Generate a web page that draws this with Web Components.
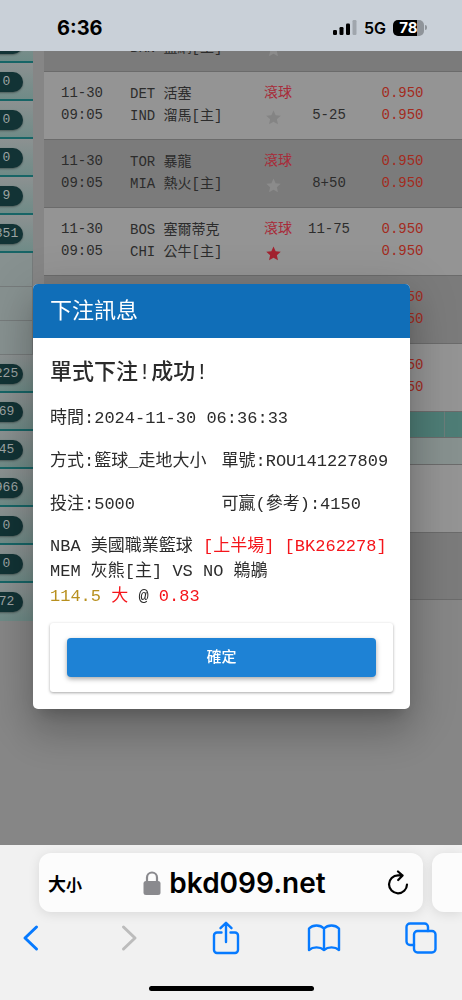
<!DOCTYPE html>
<html lang="zh-Hant">
<head>
<meta charset="utf-8">
<meta name="viewport" content="width=device-width, initial-scale=1">
<title>下注訊息</title>
<style>
  html, body {
    margin: 0;
  }
  body {
    display: flex;
    flex-direction: column;
    min-height: 100vh;
    background: #868686;
    font-family: "Liberation Mono", "Noto Sans CJK TC", monospace;
  }
</style>
</head>
<body>
<status-bar time="6:36" network="5G" battery="78"></status-bar>
<page-view>
  <side-menu slot="menu"></side-menu>
  <odds-table></odds-table>
</page-view>
<browser-bar host="bkd099.net"></browser-bar>

<bet-dialog heading="下注訊息">
  <h2 slot="title">單式下注!成功!</h2>
  <bet-receipt></bet-receipt>
</bet-dialog>

<script>
class StatusBar extends HTMLElement {
  constructor() {
    super();
    this.attachShadow({ mode: 'open' });
  }

  connectedCallback() {
    this.shadowRoot.innerHTML = `
      <style>
        :host {
          display: flex;
          justify-content: space-between;
          align-items: center;
          height: 51px;
          padding: 4px 35px 0 57px;
          box-sizing: border-box;
          background: #c9d0d8;
          color: #000;
          font-family: Inter, "Liberation Sans", sans-serif;
          position: relative;
          z-index: 1;
        }
        .time {
          font-size: 20px;
          font-weight: 700;
        }
        .right {
          display: flex;
          align-items: center;
          gap: 7px;
          font-size: 16px;
          font-weight: 600;
        }
        .battery {
          display: flex;
          align-items: center;
          gap: 1px;
        }
        .level {
          width: 31px;
          height: 16px;
          line-height: 16px;
          border-radius: 5px;
          background: linear-gradient(to right, #000 78%, #8f949a 78%);
          color: #fff;
          text-align: center;
          font-size: 15px;
          font-weight: 700;
        }
        .cap {
          width: 2px;
          height: 5px;
          border-radius: 0 2px 2px 0;
          background: #8f949a;
        }
      </style>
      <span class="time">${this.getAttribute('time')}</span>
      <div class="right">
        <svg width="24" height="15" viewBox="0 0 24 15">
          <rect x="0" y="10" width="4" height="5" rx="1.2"/>
          <rect x="6.5" y="7" width="4" height="8" rx="1.2"/>
          <rect x="13" y="3.5" width="4" height="11.5" rx="1.2"/>
          <rect x="19.5" y="0" width="4" height="15" rx="1.2" fill="#a0a6ad"/>
        </svg>
        <span>${this.getAttribute('network')}</span>
        <div class="battery">
          <span class="level">${this.getAttribute('battery')}</span>
          <span class="cap"></span>
        </div>
      </div>
    `;
  }
}

class PageView extends HTMLElement {
  constructor() {
    super();
    this.attachShadow({ mode: 'open' });
    this.shadowRoot.innerHTML = `
      <style>
        :host {
          display: flex;
          flex: 1 0 auto;
          align-items: flex-start;
          overflow: hidden;
          gap: 11px;
        }
        main {
          flex: 1;
          min-width: 0;
        }
      </style>
      <slot name="menu"></slot>
      <main><slot></slot></main>
    `;
  }
}

// null is an empty row, everything else shows a count badge
const MENU = ['0', '0', '0', '0', '9', '351', null, null, null, '225', '69', '45', '966', '0', '0', '72'];

class SideMenu extends HTMLElement {
  constructor() {
    super();
    this.attachShadow({ mode: 'open' });
  }

  connectedCallback() {
    const items = MENU.map(n => n === null
      ? '<li class="plain"></li>'
      : `<li><span>${n}</span></li>`).join('');
    this.shadowRoot.innerHTML = `
      <style>
        :host {
          display: block;
          flex: none;
          width: 33px;
          margin-top: -26px;
          overflow: hidden;
        }
        ul {
          list-style: none;
          margin: 0;
          padding: 0;
        }
        li {
          display: flex;
          justify-content: flex-end;
          align-items: center;
          height: 38px;
          padding: 2px 10px 0 0;
          box-sizing: border-box;
          border-bottom: 2px solid #176566;
          background: linear-gradient(#8c9191, #6f8b87);
        }
        li.plain {
          height: 34px;
          border-bottom: 1px solid #767b7b;
          border-right: 1px solid #767b7b;
          background: #879190;
        }
        li:last-child {
          border-bottom-color: #6f8b87;
        }
        span {
          flex: none;
          width: 33px;
          height: 20px;
          line-height: 19px;
          border-radius: 10px;
          background: #123335;
          box-shadow: 0 1px 2px rgba(0, 0, 0, .35);
          color: #9da3a3;
          font-size: 13px;
          text-align: center;
        }
      </style>
      <ul>${items}</ul>
    `;
  }
}

const GAMES = [
  { away: '', home: 'BKN 籃網[主]', date: ['', ''], live: '', line: ['', ''], odds: ['', ''] },
  { away: 'DET 活塞', home: 'IND 溜馬[主]', date: ['11-30', '09:05'], live: '滾球', line: ['', '5-25'], odds: ['0.950', '0.950'] },
  { away: 'TOR 暴龍', home: 'MIA 熱火[主]', date: ['11-30', '09:05'], live: '滾球', line: ['', '8+50'], odds: ['0.950', '0.950'] },
  { away: 'BOS 塞爾蒂克', home: 'CHI 公牛[主]', date: ['11-30', '09:05'], live: '滾球', line: ['11-75', ''], odds: ['0.950', '0.950'], fav: true },
  { odds: ['0.950', '0.950'] },
  { odds: ['0.950', '0.950'] },
  { kind: 'head' },
  { kind: 'sub' },
  {},
  {}
];

const STAR = `<svg width="15" height="15" viewBox="0 0 24 24"><path d="M12 0.8l3.4 7.6 8.2.8-6.2 5.5 1.8 8.1L12 18.6l-7.2 4.2 1.8-8.1L.4 9.2l8.2-.8z"/></svg>`;

class OddsTable extends HTMLElement {
  constructor() {
    super();
    this.attachShadow({ mode: 'open' });
  }

  lines(pair) {
    return (pair || []).map(t => `<div>${t}</div>`).join('');
  }

  row(g) {
    if (g.kind) {
      return `<tr class="${g.kind}"><td colspan="5"></td><td></td></tr>`;
    }
    const team = g.home ? this.lines([g.away, g.home]) : '';
    const live = g.home ? `<div>${g.live}</div><div class="star ${g.fav ? 'on' : ''}">${STAR}</div>` : '';
    return `
      <tr>
        <td>${this.lines(g.date)}</td>
        <td class="team">${team}</td>
        <td class="live">${live}</td>
        <td>${this.lines(g.line)}</td>
        <td class="odds">${this.lines(g.odds)}</td>
        <td></td>
      </tr>`;
  }

  connectedCallback() {
    this.shadowRoot.innerHTML = `
      <style>
        :host {
          display: block;
          margin-top: -48px;
        }
        table {
          width: 100%;
          table-layout: fixed;
          border-spacing: 0;
          color: #2c2c2c;
          font-size: 14px;
          line-height: 22px;
        }
        .c-date { width: 76px; }
        .c-team { width: 144px; }
        .c-live { width: 33px; }
        .c-line { width: 64px; }
        .c-odds { width: 83px; }
        td {
          height: 68px;
          box-sizing: border-box;
          padding: 10px 0 0;
          border-top: 1px solid #6b6b6b;
          vertical-align: top;
          text-align: center;
          white-space: nowrap;
        }
        td div {
          height: 22px;
        }
        tr { background: #949494; }
        tr:nth-child(odd) { background: #7b7b7b; }
        td.team {
          padding: 11px 0 0 10px;
          text-align: left;
        }
        td.live {
          text-align: left;
          color: #a82b39;
        }
        .star {
          display: flex;
          align-items: center;
          padding: 2px 0 0 2px;
          fill: #848484;
        }
        tr:nth-child(odd) .star { fill: #8b8b8b; }
        .star.on { fill: #a3222f; }
        td.odds { color: #a32b1e; }
        tr.head { background: #4e7d76; }
        tr.head td { height: 26px; }
        tr.head td + td { border-left: 1px solid #6b7d7a; }
        tr.sub { background: #87918f; }
        tr.sub td { height: 27px; }
        tr.head:nth-child(odd) { background: #4e7d76; }
        tr:nth-child(9) { background: #949494; }
        tr:nth-child(10) { background: #7b7b7b; }
        tr:last-child td { border-bottom: 1px solid #6b6b6b; }
      </style>
      <table>
        <colgroup>
          <col class="c-date"><col class="c-team"><col class="c-live">
          <col class="c-line"><col class="c-odds"><col>
        </colgroup>
        <tbody>${GAMES.map(g => this.row(g)).join('')}</tbody>
      </table>
    `;
  }
}

class BetDialog extends HTMLElement {
  constructor() {
    super();
    this.attachShadow({ mode: 'open' });
  }

  connectedCallback() {
    this.shadowRoot.innerHTML = `
      <style>
        :host {
          position: fixed;
          inset: 0;
          z-index: 2;
          display: flex;
          align-items: center;
          padding: 0 52px 7px 33px;
        }
        section {
          flex: 1;
          min-width: 0;
          border-radius: 5px;
          overflow: hidden;
          background: #fff;
          color: #2b2b2b;
          box-shadow: 0 11px 15px -7px rgba(0, 0, 0, .2),
            0 24px 38px 3px rgba(0, 0, 0, .14),
            0 9px 46px 8px rgba(0, 0, 0, .12);
        }
        header {
          padding: 4px 17px 0;
          line-height: 50px;
          background: #106eb8;
          color: #fff;
          font-size: 22px;
        }
        .body {
          padding: 19px 17px 17px;
        }
        ::slotted(h2) {
          margin: 0;
          font-size: 22px;
          line-height: 34px;
          font-weight: 500;
        }
        .actions {
          display: flex;
          margin-top: 14px;
          padding: 15px 17px;
          border-radius: 3px;
          box-shadow: 0 1px 3px rgba(0, 0, 0, .35);
        }
        button {
          flex: 1;
          height: 39px;
          padding: 0 0 5px;
          border: 0;
          border-radius: 4px;
          background: #1e82d5;
          box-shadow: 0 2px 5px rgba(0, 0, 0, .35);
          color: #fff;
          font: 500 15px "Noto Sans CJK TC", sans-serif;
        }
      </style>
      <section role="dialog" aria-labelledby="heading">
        <header id="heading">${this.getAttribute('heading')}</header>
        <div class="body">
          <slot name="title"></slot>
          <slot></slot>
          <div class="actions"><button type="button">確定</button></div>
        </div>
      </section>
    `;
  }
}

class BetReceipt extends HTMLElement {
  constructor() {
    super();
    this.attachShadow({ mode: 'open' });
    this.shadowRoot.innerHTML = `
      <style>
        :host {
          display: block;
          font-size: 17px;
          line-height: 25px;
          white-space: nowrap;
        }
        .grid {
          display: grid;
          grid-template-columns: 1fr 1fr;
          row-gap: 18px;
          padding: 15px 0 17px;
        }
        .wide { grid-column: 1 / -1; }
        .red { color: #f5151b; }
        .gold { color: #b8901f; }
      </style>
      <div class="grid">
        <div class="wide">時間:2024-11-30 06:36:33</div>
        <div>方式:籃球_走地大小</div>
        <div>單號:ROU141227809</div>
        <div>投注:5000</div>
        <div>可贏(參考):4150</div>
      </div>
      <div>NBA 美國職業籃球 <span class="red">[上半場] [BK262278]</span></div>
      <div>MEM 灰熊[主] VS NO 鵜鶘</div>
      <div><span class="gold">114.5</span> <span class="red">大</span> @ <span class="red">0.83</span></div>
    `;
  }
}

class BrowserBar extends HTMLElement {
  constructor() {
    super();
    this.attachShadow({ mode: 'open' });
  }

  connectedCallback() {
    this.shadowRoot.innerHTML = `
      <style>
        :host {
          display: flex;
          flex-direction: column;
          height: 155px;
          box-sizing: border-box;
          padding-top: 8px;
          overflow: hidden;
          background: #f1f1f1;
          font-family: Inter, "Noto Sans CJK TC", sans-serif;
          position: relative;
        }
        button {
          display: flex;
          align-items: center;
          justify-content: center;
          border: 0;
          padding: 0;
          background: none;
          color: #000;
          font: inherit;
        }
        .tabs {
          display: flex;
          gap: 9px;
          padding-left: 39px;
        }
        .address, .next {
          height: 59px;
          border-radius: 12px;
          background: #fcfcfc;
          box-shadow: 0 2px 12px rgba(0, 0, 0, .1);
        }
        .address {
          flex: 1;
          display: flex;
          justify-content: space-between;
          box-sizing: border-box;
          padding: 0 14px 0 9px;
        }
        .next {
          width: 30px;
          border-radius: 12px 0 0 12px;
        }
        .size {
          font-size: 18px;
          font-weight: 700;
        }
        .size small { font-size: 16px; }
        .host {
          gap: 8px;
          font-size: 28px;
          font-weight: 600;
        }
        nav {
          display: flex;
          justify-content: space-between;
          align-items: center;
          height: 52px;
          padding: 0 16px 0 6px;
          fill: none;
          stroke: #067aff;
          stroke-width: 2.4;
          stroke-linecap: round;
          stroke-linejoin: round;
        }
        nav button { width: 50px; }
        .off { stroke: #bcbcbc; }
        .home {
          width: 165px;
          height: 5px;
          margin: 22px auto 0;
          border-radius: 3px;
          background: #000;
        }
      </style>
      <div class="tabs">
        <div class="address">
          <button class="size" aria-label="大小"><span>大<small>小</small></span></button>
          <button class="host">
            <svg width="18" height="24" viewBox="0 0 18 24">
              <path d="M4 11V6.5a5 5 0 0 1 10 0V11" fill="none" stroke="#8a8a8e" stroke-width="2.2"/>
              <rect x="0.5" y="10" width="17" height="14" rx="2.5" fill="#8a8a8e"/>
            </svg>
            <span>${this.getAttribute('host')}</span>
          </button>
          <button aria-label="reload">
            <svg width="22" height="26" viewBox="0 0 22 26" fill="none" stroke="#000" stroke-width="2.2" stroke-linecap="round" stroke-linejoin="round">
              <path d="M20 14.500a9 9 0 1 1-9-9.200h4.500M11 1.500l4.600 4-4.400 4.500"/>
            </svg>
          </button>
        </div>
        <div class="next"></div>
      </div>
      <nav>
        <button aria-label="back"><svg width="18" height="28" viewBox="0 0 18 28" stroke-width="3"><path d="M14.500 3L3 14l11.500 11"/></svg></button>
        <button aria-label="forward" class="off"><svg width="18" height="28" viewBox="0 0 18 28" stroke-width="3"><path d="M3.500 3L15 14 3.500 25"/></svg></button>
        <button aria-label="share"><svg width="28" height="34" viewBox="0 0 28 34"><path d="M9.500 11.500H5a3 3 0 0 0-3 3V29a3 3 0 0 0 3 3h18a3 3 0 0 0 3-3V14.500a3 3 0 0 0-3-3h-4.500M14 21V2M8.500 7.200L14 1.800l5.500 5.400"/></svg></button>
        <button aria-label="bookmarks"><svg width="34" height="30" viewBox="0 0 34 30"><path d="M17 5.500C13 1.500 6 1.500 2 5.500V27c4-3.500 11-3.500 15 0 4-3.500 11-3.500 15 0V5.500c-4-4-11-4-15 0zM17 5.500V27"/></svg></button>
        <button aria-label="tabs"><svg width="32" height="32" viewBox="0 0 32 32"><rect x="9" y="9" width="21.500" height="21.500" rx="3.500"/><path d="M9 23H5a3.500 3.500 0 0 1-3.500-3.500V5A3.500 3.500 0 0 1 5 1.500h14.500A3.500 3.500 0 0 1 23 5v4"/></svg></button>
      </nav>
      <div class="home"></div>
    `;
  }
}

customElements.define('status-bar', StatusBar);
customElements.define('page-view', PageView);
customElements.define('side-menu', SideMenu);
customElements.define('odds-table', OddsTable);
customElements.define('bet-dialog', BetDialog);
customElements.define('bet-receipt', BetReceipt);
customElements.define('browser-bar', BrowserBar);
</script>
</body>
</html>
